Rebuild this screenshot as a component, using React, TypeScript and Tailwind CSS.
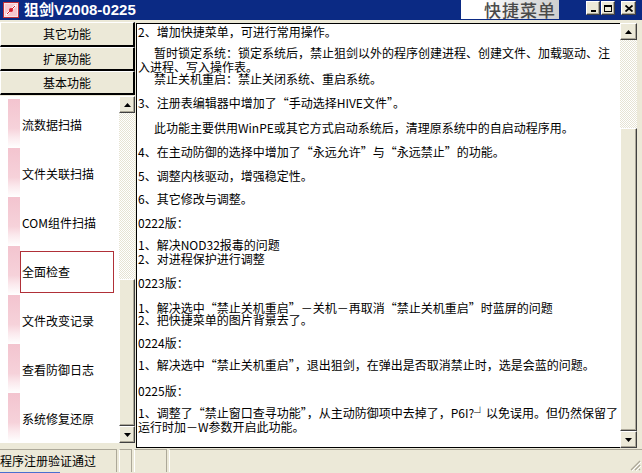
import React from "react";

const CJK = { fontFamily: '"Noto Sans CJK SC", "Liberation Sans", sans-serif' };

const lines: { t: string; c: string }[] = [
  { t: "2、增加快捷菜单，可进行常用操作。", c: "mt-[2px]" },
  { t: "暂时锁定系统：锁定系统后，禁止狙剑以外的程序创建进程、创建文件、加载驱动、注", c: "mt-[9px] pl-[16px]" },
  { t: "入进程、写入操作表。", c: "mt-[2px]" },
  { t: "禁止关机重启：禁止关闭系统、重启系统。", c: "pl-[16px]" },
  { t: "3、注册表编辑器中增加了“手动选择HIVE文件”。", c: "mt-[12px]" },
  { t: "此功能主要供用WinPE或其它方式启动系统后，清理原系统中的自启动程序用。", c: "mt-[13px] pl-[16px]" },
  { t: "4、在主动防御的选择中增加了“永远允许”与“永远禁止”的功能。", c: "mt-[12px]" },
  { t: "5、调整内核驱动，增强稳定性。", c: "mt-[12px]" },
  { t: "6、其它修改与调整。", c: "mt-[11px]" },
  { t: "0222版：", c: "mt-[12px]" },
  { t: "1、解决NOD32报毒的问题", c: "mt-[10px]" },
  { t: "2、对进程保护进行调整", c: "mt-[2px]" },
  { t: "0223版：", c: "mt-[12px]" },
  { t: "1、解决选中“禁止关机重启”－关机－再取消“禁止关机重启”时蓝屏的问题", c: "mt-[13px]" },
  { t: "2、把快捷菜单的图片背景去了。", c: "" },
  { t: "0224版：", c: "mt-[11px]" },
  { t: "1、解决选中“禁止关机重启”，退出狙剑，在弹出是否取消禁止时，选是会蓝的问题。", c: "mt-[10px]" },
  { t: "0225版：", c: "mt-[14px]" },
  { t: "1、调整了“禁止窗口查寻功能”，从主动防御项中去掉了，P6I?┘以免误用。但仍然保留了", c: "mt-[10px]" },
  { t: "运行时加－W参数开启此功能。", c: "mt-[2px]" },
];

const items = ["流数据扫描", "文件关联扫描", "COM组件扫描", "全面检查", "文件改变记录", "查看防御日志", "系统修复还原"];

const btn3d =
  "bg-[#ece9d8] border border-t-white border-l-white border-r-[#404040] border-b-[#404040] shadow-[inset_-1px_-1px_0_#aca899]";
const track =
  "bg-[image:repeating-conic-gradient(#ffffff_0_25%,#e6e3d3_0_50%)] bg-[length:2px_2px]";

function Arrow({ up }: { up?: boolean }) {
  return (
    <div className={`h-[17px] w-full flex items-center justify-center ${btn3d}`}>
      <svg width="7" height="4" viewBox="0 0 7 4">
        {up ? <polygon points="0,4 7,4 3.5,0" fill="#000" /> : <polygon points="0,0 7,0 3.5,4" fill="#000" />}
      </svg>
    </div>
  );
}

export default function App() {
  return (
    <div lang="zh-CN" className="w-[642px] h-[473px] bg-[#ece9d8] flex flex-col overflow-hidden text-black" style={CJK}>
      {/* title bar */}
      <div className="h-[20px] bg-[#0b2a84] flex items-start shrink-0">
        <div className="w-[16px] h-[16px] ml-[3px] mt-[2px]">
          <svg width="16" height="16" viewBox="0 0 16 16">
            <rect x="0.5" y="0.5" width="15" height="15" fill="#fbe3e6" stroke="#c0303a" />
            <rect x="2" y="2" width="12" height="12" fill="#f7c7cf" />
            <line x1="3" y1="13" x2="13" y2="3" stroke="#ffffff" strokeWidth="2" />
            <line x1="4" y1="12" x2="12" y2="4" stroke="#d02030" strokeWidth="1" />
            <circle cx="8" cy="8" r="2" fill="#d81e2c" />
          </svg>
        </div>
        <div
          className="ml-[5px] text-white font-bold text-[15px] leading-[20px] whitespace-nowrap"
          style={{ fontFamily: '"Liberation Sans", "Noto Sans CJK SC", sans-serif' }}
        >
          狙剑V2008-0225
        </div>
        <div className="flex-1" />
        <div className="w-[98px] h-[19px] bg-[linear-gradient(to_right,#ffffff_0%,#ffffff_25%,#e4e4e4_60%,#cfcfcf_100%)] flex items-center justify-end pr-[3px]">
          <span className="text-[17px] leading-[17px] text-[#4a4a4a] font-medium whitespace-nowrap tracking-[1px]">快捷菜单</span>
        </div>
        <div className="w-[27px]" />
        <div className="flex mt-[1px] gap-[1px]">
          <div className={`w-[14px] h-[14px] flex items-end justify-center pb-[2px] ${btn3d}`}>
            <div className="w-[5px] h-[2px] bg-black" />
          </div>
          <div className={`w-[14px] h-[14px] flex items-center justify-center ${btn3d}`}>
            <div className="w-[8px] h-[7px] border border-black border-t-2" />
          </div>
        </div>
        <div className={`ml-[6px] mt-[1px] w-[15px] h-[14px] flex items-center justify-center ${btn3d}`}>
          <svg width="8" height="7" viewBox="0 0 8 7">
            <path d="M0.5 0.5 L7.5 6.5 M7.5 0.5 L0.5 6.5" stroke="#000" strokeWidth="1.8" />
          </svg>
        </div>
        <div className="w-[6px]" />
      </div>

      {/* body */}
      <div className="h-[429px] flex shrink-0">
        {/* left column */}
        <div className="w-[136px] flex flex-col pt-[2px]">
          {["其它功能", "扩展功能", "基本功能"].map((b, i) => (
            <div
              key={b}
              className={`${i === 0 ? "h-[25px]" : "h-[24px]"} w-[135px] bg-[#ece9d8] border-t border-l border-t-white border-l-white border-b-2 border-r-2 border-b-black border-r-black flex items-center justify-center text-[12px] leading-[12px]`}
            >
              {b}
            </div>
          ))}
          <div className="mt-[1px] h-[347px] flex">
            <div className="w-[119px] bg-white pt-[3px] flex flex-col">
              {items.map((it, i) => (
                <div key={it} className="h-[49px] flex">
                  <div className="ml-[8px] w-[12px] h-full bg-[linear-gradient(to_bottom,#f3c4cf_0%,#f6d2da_60%,#fbe9ed_78%,#ffffff_100%)]" />
                  <div
                    className={`mt-[5px] mb-[2px] w-[94px] border flex items-center pl-[1px] text-[12px] leading-[12px] whitespace-nowrap ${
                      i === 3 ? "border-[#b03038]" : "border-transparent"
                    }`}
                  >
                    {it}
                  </div>
                </div>
              ))}
            </div>
            <div className="w-[16px] flex flex-col">
              <Arrow up />
              <div className={`h-[166px] ${track}`} />
              <div className={`flex-1 ${btn3d}`} />
              <Arrow />
            </div>
          </div>
        </div>

        {/* right content */}
        <div className="flex-1 flex mt-[3px] h-[425px] mr-[5px]">
          <div className="flex-1 bg-white border-l border-t border-b border-black pl-[1px] overflow-hidden">
            {lines.map((l, i) => (
              <div key={i} className={`h-[12px] text-[12px] leading-[12px] whitespace-nowrap ${l.c}`}>
                {l.t}
              </div>
            ))}
          </div>
          <div className="w-[17px] flex flex-col">
            <Arrow up />
            <div className={`h-[88px] ${track}`} />
            <div className={`flex-1 ${btn3d}`} />
            <Arrow />
          </div>
        </div>
      </div>

      {/* status bar */}
      <div className="h-[23px] flex shrink-0 text-[12px]">
        <div className="w-[117px] border-t border-r border-[#aca899] flex items-center whitespace-nowrap leading-[12px]">
          程序注册验证通过
        </div>
        <div className="ml-[2px] w-[13px] border-t border-r border-l border-[#aca899] border-l-white" />
        <div className="ml-[2px] w-[33px] border-t border-r border-l border-[#aca899] border-l-white" />
        <div className="ml-[2px] flex-1 border-t border-l border-[#aca899] border-l-white flex items-end justify-end">
          <svg width="12" height="12" viewBox="0 0 12 12" className="mb-[1px] mr-[1px]">
            <path d="M11 2 L2 11 M11 6 L6 11 M11 10 L10 11" stroke="#aca899" strokeWidth="1.2" />
            <path d="M12 3 L3 12 M12 7 L7 12" stroke="#ffffff" strokeWidth="1" />
          </svg>
        </div>
      </div>
      <div className="h-[1px] flex shrink-0">
        <div className="w-[60px] bg-[#4a6fd0]" />
      </div>
    </div>
  );
}
